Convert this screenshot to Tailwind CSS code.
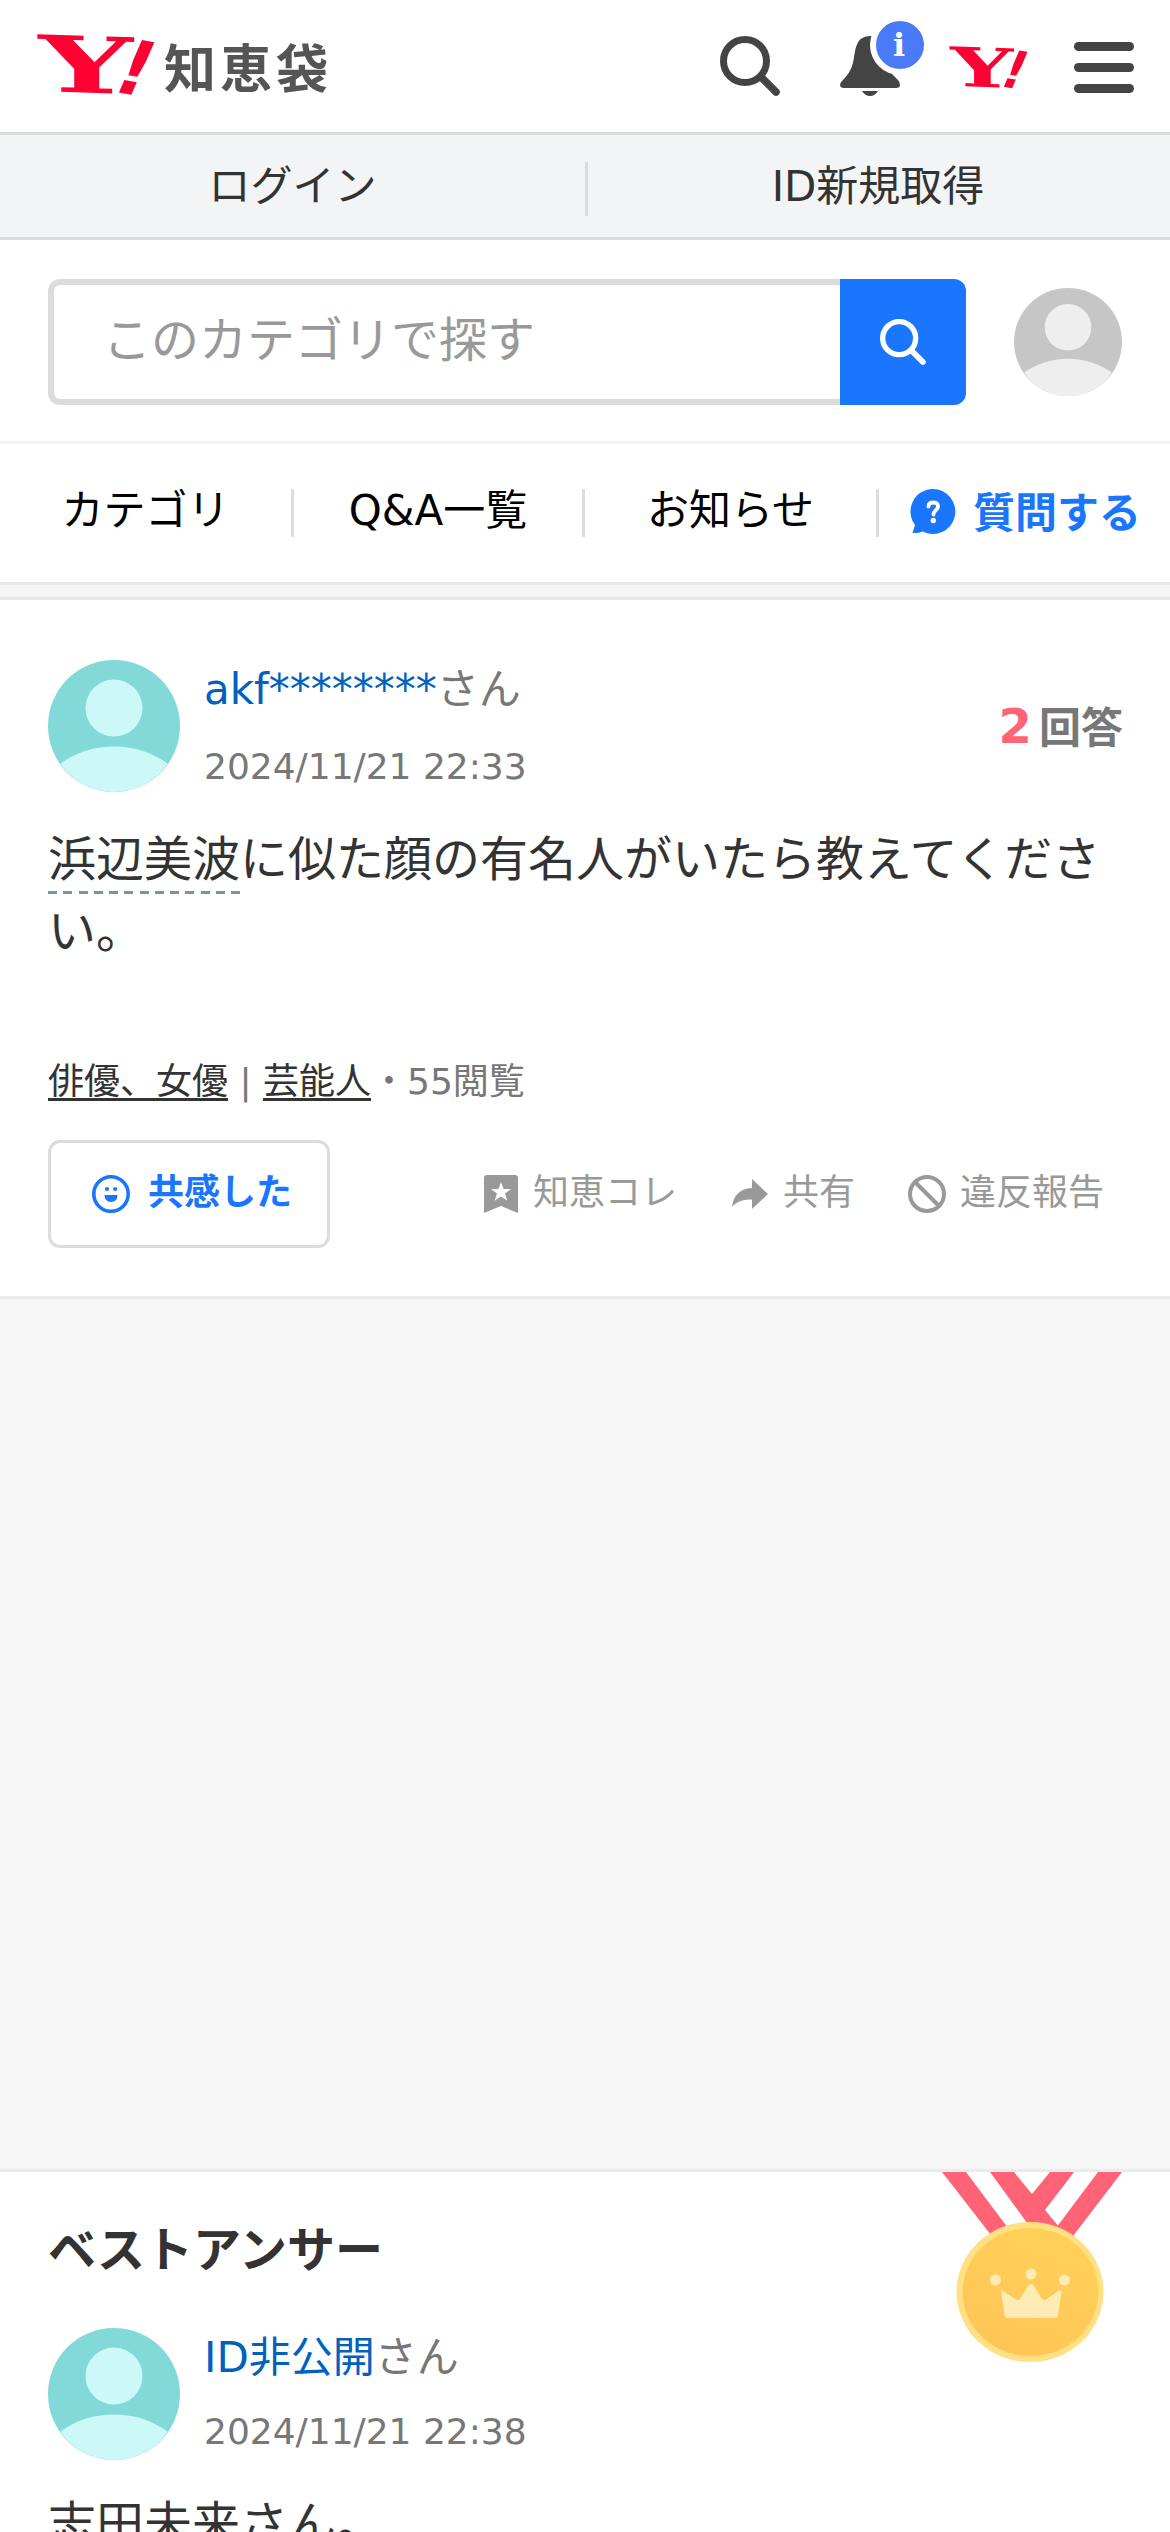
<!DOCTYPE html>
<html lang="ja">
<head>
<meta charset="utf-8">
<title>Y!知恵袋</title>
<script src="https://cdn.jsdelivr.net/npm/@tailwindcss/browser@4"></script>
</head>
<body class="w-[1170px] h-[2532px] overflow-hidden bg-white text-[#333] font-['DejaVu_Sans','Noto_Sans_CJK_JP',sans-serif]">
<svg class="hidden">
  <symbol id="person" viewBox="0 0 132 132">
    <circle cx="66" cy="48" r="28.500"/>
    <path d="M12.500 103.500C27 93 45 86.500 66 86.500S105 93 119.500 103.500C108 121 88 132 66 132S24 121 12.500 103.500Z"/>
  </symbol>
  <symbol id="lens" viewBox="0 0 60 60">
    <circle cx="25" cy="25" r="21.500" fill="none" stroke="currentColor" stroke-width="7"/>
    <path d="M41 41L56 56" fill="none" stroke="currentColor" stroke-width="7.500" stroke-linecap="round"/>
  </symbol>
</svg>

<header class="flex h-[135px] items-start border-b-[3px] border-[#d9dcdd]">
  <div class="flex pl-[38px] pt-[28px]">
    <svg class="w-[122px] h-[72px] overflow-visible" viewBox="38 28 122 72" fill="#ff0033" font-family="DejaVu Serif" font-weight="bold">
      <text transform="matrix(1.050 .035 0 1 38.500 91)" font-size="78" textLength="90" lengthAdjust="spacingAndGlyphs">Y</text>
      <text transform="matrix(.980 .160 -.440 1 109 91)" font-size="72" font-family="DejaVu Sans">!</text>
    </svg>
    <div class="ml-[4px] text-[52px] leading-[84px] font-bold tracking-[4px] text-[#555]">知恵袋</div>
  </div>
  <div class="ml-auto flex pr-[36px]">
    <svg class="mt-[36px] w-[60px] h-[60px] text-[#444]"><use href="#lens"/></svg>
    <svg class="ml-[60px] mt-[20px] w-[86px] h-[80px]" viewBox="840 20 86 80">
      <path d="M840 85Q840 82 843 80C855 68 853 58 856 47Q859 36 870 36Q881 36 886 50L892 74L898 80Q900 82 900 85Q900 88 896 88H844Q840 88 840 85Z" fill="#444"/>
      <path d="M862 91H878Q875 96 870 96T862 91Z" fill="#444"/>
      <circle cx="900" cy="45" r="30" fill="#fff"/>
      <circle cx="900" cy="45" r="24" fill="#4a7af7"/>
      <text x="899" y="55.500" text-anchor="middle" fill="#fff" font-family="DejaVu Serif" font-weight="bold" font-size="32">i</text>
    </svg>
    <svg class="ml-[24px] mt-[42px] w-[84px] h-[50px] overflow-visible" viewBox="38 28 126 72" preserveAspectRatio="none" fill="#ff0033" font-family="DejaVu Serif" font-weight="bold">
      <text transform="matrix(1.050 .035 0 1 38.500 91)" font-size="78" textLength="90" lengthAdjust="spacingAndGlyphs">Y</text>
      <text transform="matrix(.980 .160 -.440 1 109 91)" font-size="72" font-family="DejaVu Sans">!</text>
    </svg>
    <div class="ml-[40px] mt-[42px] flex w-[60px] flex-col gap-[12px]">
      <i class="h-[9px] rounded-full bg-[#444]"></i><i class="h-[9px] rounded-full bg-[#444]"></i><i class="h-[9px] rounded-full bg-[#444]"></i>
    </div>
  </div>
</header>

<div class="flex h-[105px] items-start border-b-[3px] border-[#d9dcdd] bg-[#f2f4f5] text-center text-[42px] leading-[104px]">
  <a class="w-[585px]">ログイン</a><i class="mt-[27px] h-[54px] w-[3px] bg-[#d9dcdd]"></i><a class="w-[580px]">ID新規取得</a>
</div>

<div class="flex h-[204px] items-start border-b-[3px] border-[#f2f2f2] pl-[48px] pt-[39px]">
  <div class="h-[126px] w-[792px] rounded-l-[12px] border-[6px] border-r-0 border-[#dcdcdc] pl-[49px] text-[48px] leading-[110px] text-[#999]">このカテゴリで探す</div>
  <div class="flex h-[126px] w-[126px] items-center justify-center rounded-r-[12px] bg-[#1a75ff] text-white">
    <svg class="w-[46px] h-[46px]"><use href="#lens"/></svg>
  </div>
  <div class="ml-[48px] mt-[9px] h-[108px] w-[108px] rounded-full bg-[#c6c6c6]"><svg class="size-full" fill="#eee"><use href="#person"/></svg></div>
</div>

<nav class="flex h-[141px] items-center border-b-[3px] border-[#e8e8e8] pb-0 text-[42px] text-black">
  <a class="w-[291px] text-center leading-[132px] pb-[4px]">カテゴリ</a><i class="h-[48px] w-[3px] bg-[#dcdcdc]"></i>
  <a class="w-[288px] text-center leading-[132px] pb-[4px]">Q&amp;A一覧</a><i class="h-[48px] w-[3px] bg-[#dcdcdc]"></i>
  <a class="w-[291px] text-center leading-[132px] pb-[4px]">お知らせ</a><i class="h-[48px] w-[3px] bg-[#dcdcdc]"></i>
  <svg class="ml-[31px] mb-[3px] w-[46px] h-[46px]" viewBox="0 0 46 46"><path d="M23 0a22.500 22.500 0 1 1-10.500 42.500Q8 44.500 2.500 44L5 36A22.500 22.500 0 0 1 23 0Z" fill="#1a75ff"/><path d="M18.500 17.500Q18.500 13.500 23.300 13.500T28 17.500C28 21 23.500 21.500 23.500 25.500" fill="none" stroke="#fff" stroke-width="3.800" stroke-linecap="round"/><circle cx="23.300" cy="31.500" r="2.700" fill="#fff"/></svg>
  <a class="ml-[17px] mt-[2px] font-bold leading-[132px] text-[#1a75ff]">質問する</a>
</nav>
<div class="h-[15px] border-b-[3px] border-[#e8e8e8] bg-[#f6f6f6]"></div>

<section class="h-[699px] border-b-[3px] border-[#ebebeb] px-[48px] pt-[60px]">
  <div class="flex items-start">
    <div class="size-[132px] rounded-full bg-[#82d9d7]"><svg class="size-full" fill="#cdf8f8"><use href="#person"/></svg></div>
    <div class="ml-[24px] flex-1 text-[#777]">
      <div class="text-[42px] leading-[60px]"><a class="text-[#0062bd]">akf********</a>さん</div>
      <div class="mt-[18px] text-[36px] leading-[58px]">2024/11/21 22:33</div>
    </div>
    <div class="mt-[30px] -mr-px flex items-baseline gap-[7px] font-bold leading-[72px]"><b class="text-[48px] text-[#ff6375]">2</b><span class="text-[42px] text-[#777]">回答</span></div>
  </div>
  <p class="mt-[27px] text-[48px] leading-[72px]"><span class="bg-[repeating-linear-gradient(90deg,#78959d_0_9px,transparent_9px_15.25px)] bg-[length:100%_3px] bg-bottom bg-no-repeat pb-[7px]">浜辺美波</span>に似た顔の有名人がいたら教えてください。</p>
  <div class="mt-[88px] text-[36px] leading-[54px] text-[#777]"><a class="text-[#333] underline decoration-[3px] underline-offset-[4px]">俳優、女優</a> | <a class="text-[#333] underline decoration-[3px] underline-offset-[4px]">芸能人</a>・55閲覧</div>
  <div class="mt-[31px] flex h-[108px] items-center text-[36px] leading-[54px] text-[#999]">
    <button class="flex h-[108px] w-[282px] items-center rounded-[12px] border-[3px] border-[#dcdcdc] pl-[41px] font-bold text-[#1a75ff]">
      <svg class="w-[38px] h-[38px]" viewBox="0 0 38 38" fill="currentColor"><circle cx="19" cy="19" r="17.200" fill="none" stroke="currentColor" stroke-width="3.600"/><circle cx="15" cy="14" r="2.100"/><circle cx="23.200" cy="14" r="2.100"/><path d="M12.500 20H25.500Q25.500 27 19 27T12.500 20Z"/></svg>
      <span class="ml-[18px] mb-[3px]">共感した</span>
    </button>
    <svg class="ml-[154px] w-[34px] h-[38px]" viewBox="0 0 34 38"><path d="M3 0H31Q34 0 34 3V38L17 31L0 38V3Q0 0 3 0Z" fill="#999"/><path d="M17 7l2.500 7h7.500l-6 4.500 2.300 7.300L17 21.400l-6.300 4.400 2.300-7.300-6-4.500h7.500Z" fill="#fff"/></svg>
    <span class="ml-[15px] mb-[3px]">知恵コレ</span>
    <svg class="ml-[55px] w-[36px] h-[30px]" viewBox="0 0 36 30"><path d="M20 0L36 15L20 30V20.500Q7 19.500 0 28Q2 10 20 9Z" fill="#999"/></svg>
    <span class="ml-[15px] mb-[3px]">共有</span>
    <svg class="ml-[53px] w-[38px] h-[38px]" viewBox="0 0 38 38" fill="none" stroke="#999" stroke-width="4"><circle cx="19" cy="19" r="17"/><path d="M7 7L31 31"/></svg>
    <span class="ml-[14px] mb-[3px]">違反報告</span>
  </div>
</section>

<div class="h-[873px] border-b-[3px] border-[#ebebeb] bg-[#f6f6f6]"></div>

<section class="relative px-[48px] pt-[42px]">
  <svg class="absolute right-[48px] top-0 w-[180px] h-[192px]" viewBox="942 2172 180 192">
    <defs><linearGradient id="gold" x1=".7" y1="0" x2=".3" y2="1"><stop offset="0" stop-color="#ffd158"/><stop offset="1" stop-color="#ffc557"/></linearGradient></defs>
    <path fill="#ff6375" d="M942 2172h24l54 72h-22ZM990 2172h24l18 22 18-22h24l-29 38 14 17-4 15h-14ZM1098 2172h24l-52 68-14-12Z"/>
    <ellipse cx="1030" cy="2292" rx="73.500" ry="70" fill="#ffe083"/>
    <ellipse cx="1030.500" cy="2292" rx="68" ry="64" fill="url(#gold)"/>
    <g fill="#ffebb4"><circle cx="995.500" cy="2280" r="5.500"/><circle cx="1031" cy="2274" r="5.500"/><circle cx="1064.500" cy="2280" r="5.500"/><path d="M1001 2291Q1001 2289 1003 2290.500L1016 2299.500Q1018 2301 1020 2299L1028 2286Q1031 2282 1034 2286L1042 2299Q1044 2301 1046 2299.500L1059 2290.500Q1061.500 2289 1061.500 2292L1058 2315Q1057.500 2318 1055 2318H1008Q1005 2318 1004.500 2315Z"/></g>
  </svg>
  <h2 class="text-[48px] font-bold leading-[72px]">ベストアンサー</h2>
  <div class="mt-[42px] flex items-start">
    <div class="size-[132px] rounded-full bg-[#82d9d7]"><svg class="size-full" fill="#cdf8f8"><use href="#person"/></svg></div>
    <div class="ml-[24px] text-[#777]">
      <div class="text-[42px] leading-[60px]"><a class="text-[#0062bd]">ID非公開</a>さん</div>
      <div class="mt-[15px] text-[36px] leading-[58px]">2024/11/21 22:38</div>
    </div>
  </div>
  <p class="mt-[27px] text-[48px] leading-[72px]">志田未来さん。</p>
</section>
</body>
</html>
